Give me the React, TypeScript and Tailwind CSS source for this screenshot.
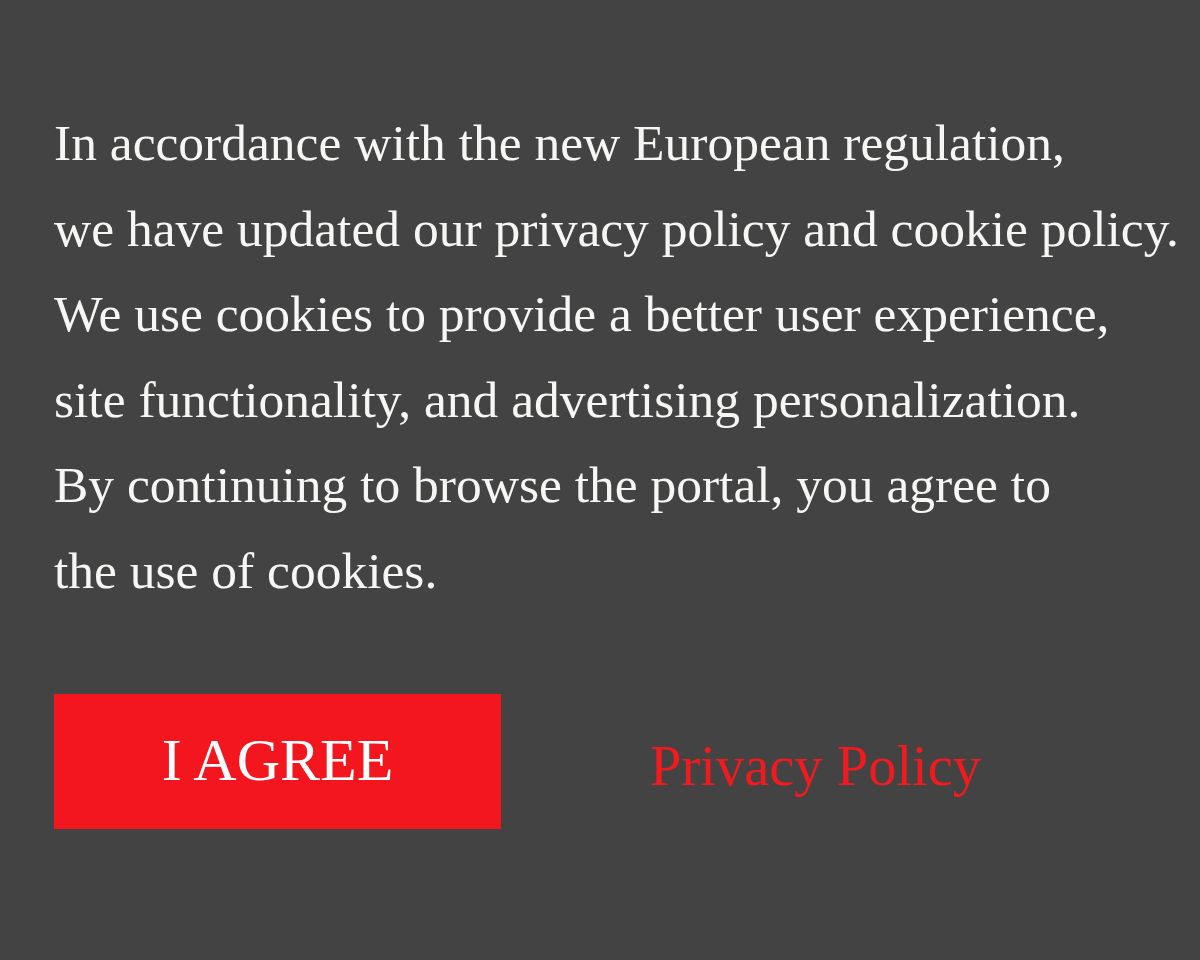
const lines = [
  'In accordance with the new European regulation,',
  'we have updated our privacy policy and cookie policy.',
  'We use cookies to provide a better user experience,',
  'site functionality, and advertising personalization.',
  'By continuing to browse the portal, you agree to',
  'the use of cookies.',
];

export default function App() {
  return (
    <div className="w-[1200px] h-[960px] bg-[#444343] font-['Liberation_Serif',serif] text-white overflow-hidden">
      <div className="pl-[54px] pt-[100px]">
        {/* Notice text */}
        <p className="text-[51.5px] leading-[85.5px] text-[#f6f6f4]">
          {lines.map((line) => (
            <span key={line} className="block whitespace-nowrap">
              {line}
            </span>
          ))}
        </p>

        {/* Actions */}
        <div className="mt-[81px] flex items-center">
          <button className="w-[447px] h-[135px] bg-[#f4161e] text-white text-[60px] leading-none pb-[4px]">
            I AGREE
          </button>
          <a href="#" className="ml-[149px] mt-[10px] text-[56.5px] leading-none text-[#f01a1f]">
            Privacy Policy
          </a>
        </div>
      </div>
    </div>
  );
}
